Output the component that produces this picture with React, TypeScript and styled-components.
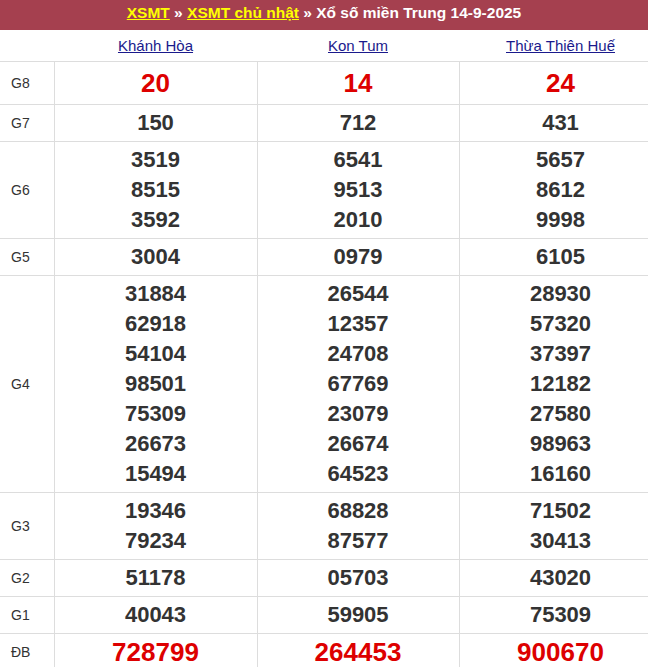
import React from "react";
import styled, { createGlobalStyle } from "styled-components";

const GlobalStyle = createGlobalStyle`
    html, body {
        margin: 0;
        padding: 0;
        background: #ffffff;
        overflow: hidden;
    }
    body {
        font-family: "Liberation Sans", Arial, sans-serif;
    }
`;

const Page = styled.div`
    width: 648px;
    overflow: hidden;
`;

const TitleBar = styled.div`
    height: 30px;
    box-sizing: border-box;
    padding-bottom: 5px;
    line-height: 25px;
    background: #a5404f;
    color: #ffffff;
    font-weight: bold;
    font-size: 15.5px;
    text-align: center;
    white-space: nowrap;
`;

const TitleLink = styled.a`
    color: #ffff00;
    text-decoration: underline;
`;

const ResultTable = styled.table`
    width: 662px;
    border-collapse: collapse;
    table-layout: fixed;
`;

const HeadCell = styled.th`
    height: 31px;
    padding: 0;
    border-bottom: 1px solid #dddddd;
    text-align: center;
    vertical-align: middle;
    font-weight: normal;
    font-size: 15px;
`;

const ProvinceLink = styled.a`
    color: #1a1a8c;
    text-decoration: underline;
`;

const PrizeCell = styled.td`
    padding: 0 0 0 11px;
    border: 1px solid #dddddd;
    border-left: none;
    font-size: 14px;
    color: #333333;
    vertical-align: middle;
`;

const NumberCell = styled.td<{ $big?: boolean; $tall?: boolean }>`
    padding: 3px 0;
    border: 1px solid #dddddd;
    text-align: center;
    vertical-align: middle;
    font-weight: bold;
    font-size: ${(p) => (p.$big ? "26px" : "22px")};
    line-height: ${(p) => (p.$tall ? "36px" : "30px")};
    color: ${(p) => (p.$big ? "#dd0000" : "#333333")};
`;

const NumberLine = styled.div`
    white-space: nowrap;
`;

type Row = { label: string; values: string[][]; big?: boolean; tall?: boolean };

const rows: Row[] = [
    { label: "G8", values: [["20"], ["14"], ["24"]], big: true, tall: true },
    { label: "G7", values: [["150"], ["712"], ["431"]] },
    {
        label: "G6",
        values: [
            ["3519", "8515", "3592"],
            ["6541", "9513", "2010"],
            ["5657", "8612", "9998"],
        ],
    },
    { label: "G5", values: [["3004"], ["0979"], ["6105"]] },
    {
        label: "G4",
        values: [
            ["31884", "62918", "54104", "98501", "75309", "26673", "15494"],
            ["26544", "12357", "24708", "67769", "23079", "26674", "64523"],
            ["28930", "57320", "37397", "12182", "27580", "98963", "16160"],
        ],
    },
    {
        label: "G3",
        values: [
            ["19346", "79234"],
            ["68828", "87577"],
            ["71502", "30413"],
        ],
    },
    { label: "G2", values: [["51178"], ["05703"], ["43020"]] },
    { label: "G1", values: [["40043"], ["59905"], ["75309"]] },
    { label: "ĐB", values: [["728799"], ["264453"], ["900670"]], big: true },
];

const provinces = ["Khánh Hòa", "Kon Tum", "Thừa Thiên Huế"];

export default function App() {
    return (
        <Page>
            <GlobalStyle />
            <TitleBar>
                <TitleLink href="#">XSMT</TitleLink> » <TitleLink href="#">XSMT chủ nhật</TitleLink> » Xổ số miền
                Trung 14-9-2025
            </TitleBar>
            <ResultTable>
                <colgroup>
                    <col style={{ width: 54 }} />
                    <col style={{ width: 203 }} />
                    <col style={{ width: 202 }} />
                    <col style={{ width: 203 }} />
                </colgroup>
                <thead>
                    <tr>
                        <HeadCell />
                        {provinces.map((p) => (
                            <HeadCell key={p}>
                                <ProvinceLink href="#">{p}</ProvinceLink>
                            </HeadCell>
                        ))}
                    </tr>
                </thead>
                <tbody>
                    {rows.map((r) => (
                        <tr key={r.label}>
                            <PrizeCell>{r.label}</PrizeCell>
                            {r.values.map((col, i) => (
                                <NumberCell key={i} $big={r.big} $tall={r.tall}>
                                    {col.map((n, j) => (
                                        <NumberLine key={j}>{n}</NumberLine>
                                    ))}
                                </NumberCell>
                            ))}
                        </tr>
                    ))}
                </tbody>
            </ResultTable>
        </Page>
    );
}
